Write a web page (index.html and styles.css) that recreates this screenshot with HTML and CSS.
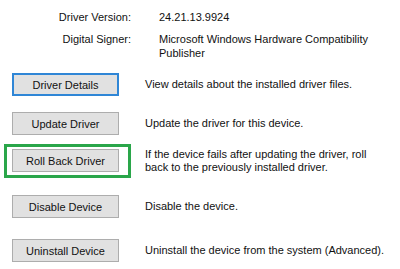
FILE: index.html
```html
<!DOCTYPE html>
<html lang="en">
    <head>
        <title>Driver</title>
        <link rel="stylesheet" href="styles.css">
    </head>
    <body>
        <main class="panel">
            <div class="info">
                <span class="info-label">Driver Version:</span>
                <span class="info-value">24.21.13.9924</span>
                <span class="info-label">Digital Signer:</span>
                <span class="info-value">Microsoft Windows Hardware Compatibility Publisher</span>
            </div>
            <div class="actions">
                <div class="action-row">
                    <div class="btn-cell"><button class="btn btn-default">Driver Details</button></div>
                    <p class="desc">View details about the installed driver files.</p>
                </div>
                <div class="action-row row-update">
                    <div class="btn-cell"><button class="btn">Update Driver</button></div>
                    <p class="desc">Update the driver for this device.</p>
                </div>
                <div class="action-row row-rollback">
                    <div class="btn-cell highlight"><button class="btn">Roll Back Driver</button></div>
                    <p class="desc">If the device fails after updating the driver, roll back to the previously installed driver.</p>
                </div>
                <div class="action-row row-disable">
                    <div class="btn-cell"><button class="btn">Disable Device</button></div>
                    <p class="desc">Disable the device.</p>
                </div>
                <div class="action-row row-uninstall">
                    <div class="btn-cell"><button class="btn">Uninstall Device</button></div>
                    <p class="desc">Uninstall the device from the system (Advanced).</p>
                </div>
            </div>
        </main>
    </body>
</html>
```
FILE: styles.css
```css
body {
    margin: 0;
    background-color: #ffffff;
    color: #111111;
    font-family: "Liberation Sans", Arial, sans-serif;
    font-size: 11px;
}

.panel {
    padding-top: 10px;
}

.info {
    display: grid;
    grid-template-columns: 131px 225px;
    column-gap: 28px;
    row-gap: 8px;
    line-height: 14px;
}

.info-label {
    text-align: right;
}

.actions {
    display: flex;
    flex-direction: column;
    margin-top: 13px;
    margin-left: 4px;
}

.action-row {
    display: flex;
    align-items: center;
}

.row-update {
    margin-top: 16px;
}

.row-rollback {
    margin-top: 9px;
}

.row-disable {
    margin-top: 17px;
}

.row-uninstall {
    margin-top: 21px;
}

.btn-cell {
    width: 127px;
    box-sizing: border-box;
    padding-left: 8px;
}

.btn-cell.highlight {
    border: 3px solid #2aa64a;
    padding: 2px 0 3px 5px;
}

.btn {
    display: block;
    width: 107px;
    height: 23px;
    padding: 0;
    background-color: #e1e1e1;
    border: 1px solid #adadad;
    color: #111111;
    font-family: "Liberation Sans", Arial, sans-serif;
    font-size: 11px;
}

.btn-default {
    border: 2px solid #2f86d6;
}

.desc {
    margin: 0 0 0 14px;
    width: 246px;
    line-height: 13px;
}
```
